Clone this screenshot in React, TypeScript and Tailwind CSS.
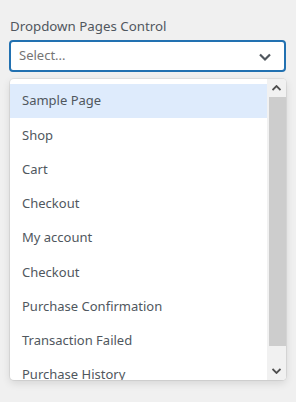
import React from "react";

const items = [
  "Sample Page",
  "Shop",
  "Cart",
  "Checkout",
  "My account",
  "Checkout",
  "Purchase Confirmation",
  "Transaction Failed",
  "Purchase History",
];

export default function App() {
  return (
    <div
      className="w-[296px] h-[402px] bg-[#f0f0f0] pt-[17px] pl-[9px] pr-[10px] overflow-hidden"
      style={{ fontFamily: '"Noto Sans", "Open Sans", sans-serif' }}
    >
      <div className="text-[13.3px] leading-[18px] text-[#50575e] pl-px mb-[5px]">
        Dropdown Pages Control
      </div>
      <div className="h-[32px] border-2 border-[#2271b1] rounded-[4px] bg-white flex items-center pl-[8px] pr-[12px]">
        <span className="flex-1 text-[13px] text-[#757575]">Select...</span>
        <svg width="14" height="14" viewBox="0 0 14 14" className="mt-px">
          <path d="M2 4.5 L7 9.5 L12 4.5" fill="none" stroke="#50575e" strokeWidth="2.2" />
        </svg>
      </div>
      <div className="mt-[7px] ml-px w-[276px] h-[301px] bg-white rounded-[4px] overflow-hidden flex shadow-[0_0_0_1px_rgba(0,0,0,0.06),0_3px_8px_rgba(0,0,0,0.12)]">
        <div className="flex-1 pt-[5px] overflow-hidden">
          {items.map((t, i) => (
            <div
              key={i}
              className={
                "h-[34.25px] flex items-center pl-[12px] text-[13px] text-[#50575e] " +
                (i === 0 ? "bg-[#deebfc]" : "")
              }
            >
              {t}
            </div>
          ))}
        </div>
        <div className="w-[19px] bg-[#f1f1f1] flex flex-col">
          <div className="h-[18px] flex items-center justify-center">
            <svg width="9" height="6" viewBox="0 0 9 6">
              <path d="M0.5 5 L4.5 1 L8.5 5" fill="none" stroke="#505050" strokeWidth="1.8" />
            </svg>
          </div>
          <div className="h-[249px] ml-[2px] bg-[#cdcdcd]" />
          <div className="flex-1" />
          <div className="h-[18px] flex items-center justify-center">
            <svg width="9" height="6" viewBox="0 0 9 6">
              <path d="M0.5 1 L4.5 5 L8.5 1" fill="none" stroke="#505050" strokeWidth="1.8" />
            </svg>
          </div>
        </div>
      </div>
    </div>
  );
}
